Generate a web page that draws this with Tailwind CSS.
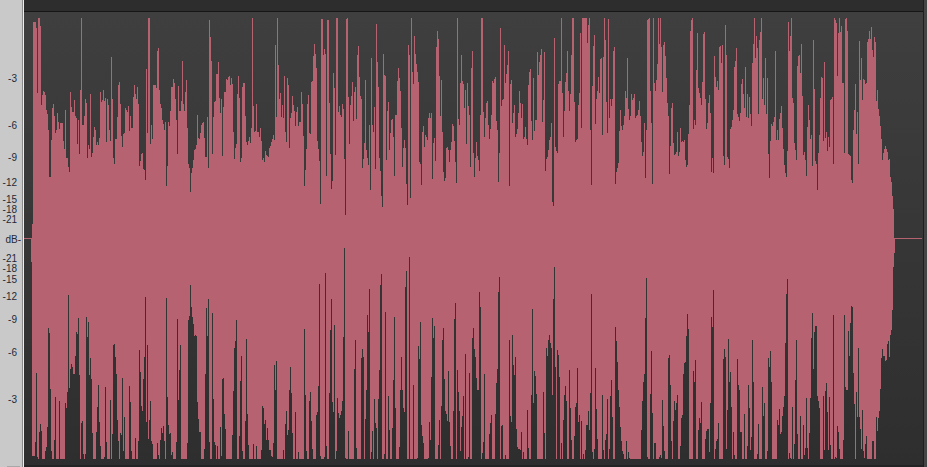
<!DOCTYPE html>
<html>
<head>
<meta charset="utf-8">
<script src="https://cdn.jsdelivr.net/npm/@tailwindcss/browser@4"></script>
<title>Waveform</title>
</head>
<body class="bg-[#3a3a3a]">
<div class="flex h-[467px] w-[927px] overflow-hidden">
  <div class="flex w-[22px] flex-col items-end bg-[#c9c9c9] pt-[73px] pr-[5px] font-['Liberation_Sans',sans-serif] text-[10px] leading-[12px] text-[#1f2a36]">
    <div class="h-[47px] shrink-0">-3</div>
    <div class="h-[32px] shrink-0">-6</div>
    <div class="h-[25px] shrink-0">-9</div>
    <div class="h-[17px] shrink-0">-12</div>
    <div class="h-[10px] shrink-0">-15</div>
    <div class="h-[10px] shrink-0">-18</div>
    <div class="h-[20px] shrink-0">-21</div>
    <div class="mr-[-4px] h-[19px] shrink-0">dB-</div>
    <div class="h-[10px] shrink-0">-21</div>
    <div class="h-[11px] shrink-0">-18</div>
    <div class="h-[17px] shrink-0">-15</div>
    <div class="h-[23px] shrink-0">-12</div>
    <div class="h-[33px] shrink-0">-9</div>
    <div class="h-[47px] shrink-0">-6</div>
    <div class="shrink-0">-3</div>
    <div class="mt-auto mr-[-3px] h-px w-[13px] shrink-0 bg-[#a8a8a8]"></div>
  </div>
  <div class="w-px bg-[#8a8a8a]"></div>
  <div class="w-px bg-[#ededed]"></div>
  <div class="flex w-[899px] flex-col">
    <div class="h-[11px] shrink-0 bg-[#2d2d2d]"></div>
    <div class="h-px shrink-0 bg-[#161616]"></div>
    <div class="h-[455px] shrink-0 bg-gradient-to-b from-[#3f3f3f] to-[#2e2e2e]">
      <svg class="block h-[455px] w-[899px]" viewBox="24 12 899 455" shape-rendering="crispEdges" xmlns="http://www.w3.org/2000/svg">
        <rect x="24" y="238" width="898" height="1" fill="#b76270"/>
        <rect x="24" y="465" width="899" height="2" fill="#232323"/>
        <path fill="#b76270" d="M32 239V224H33V22H36V28H37V93H38V18H40V26H41V105H42V95H43V91H44V92H45V95H46V110H47V114H48V130H49V177H51V140H52V108H53V104H54V116H55V133H56V130H57V113H58V122H59V129H60V123H63V141H64V149H65V110H66V158H68V167H69V172H70V92H71V107H72V112H74V100H75V116H76V118H77V144H78V120H79V154H80V90H81V18H82V125H84V116H85V99H86V103H87V158H88V145H89V149H90V94H91V157H92V153H93V137H94V127H95V130H96V145H97V142H98V145H99V138H100V92H101V102H102V100H103V90H104V101H105V98H106V142H107V99H108V105H109V130H110V141H111V57H112V99H113V158H114V164H115V139H117V117H118V85H119V82H120V104H121V136H122V147H123V134H124V133H125V108H126V110H127V112H128V106H129V131H130V116H131V128H133V97H134V85H135V94H136V99H137V87H138V104H139V166H140V161H141V154H142V153H143V169H144V170H145V180H146V69H147V133H148V18H150V144H151V125H152V139H153V85H155V85H156V88H157V51H158V48H159V90H160V104H161V108H162V120H163V124H164V130H165V122H166V186H167V166H168V122H169V126H170V111H171V87H173V79H174V83H175V99H176V120H177V154H178V86H179V111H181V101H182V61H183V104H184V111H185V92H186V80H187V128H188V164H189V168H190V192H191V173H192V168H193V160H194V150H195V149H196V145H197V115H198V138H199V139H200V133H201V125H202V123H203V122H204V138H205V157H207V117H208V168H209V20H210V37H211V61H212V154H213V117H214V102H215V101H216V74H218V62H219V98H220V113H221V99H222V156H223V107H224V92H226V79H227V80H228V77H229V76H230V85H231V78H232V84H233V132H234V159H235V148H236V144H237V94H238V76H239V98H240V162H241V158H242V87H243V83H245V116H246V142H247V145H248V141H249V137H250V143H251V128H252V18H253V106H254V132H255V131H256V104H257V132H258V132H259V137H260V128H261V141H262V160H263V158H264V162H265V151H266V155H267V156H268V157H269V148H270V146H271V142H272V139H273V135H274V140H275V45H276V117H277V18H278V65H279V99H280V93H281V117H282V105H283V118H284V76H285V132H286V142H287V78H288V85H289V148H290V118H291V113H292V96H293V105H294V111H295V126H296V112H297V107H298V126H299V122H301V92H302V104H303V136H304V186H305V170H306V149H307V104H308V95H309V133H310V134H311V82H312V81H313V56H314V44H315V54H316V68H317V141H318V149H319V161H320V204H321V19H323V55H324V49H325V54H326V176H327V20H329V103H330V154H331V189H332V181H333V73H334V88H335V155H336V18H338V112H339V106H340V115H341V117H342V104H343V109H344V159H345V215H346V19H347V18H348V97H349V144H350V105H351V96H352V82H353V121H354V92H355V87H356V119H357V55H358V46H359V77H360V96H361V99H362V168H363V159H364V143H365V80H366V150H367V158H368V165H369V125H370V190H371V58H372V125H373V132H374V107H375V169H376V24H377V62H378V87H379V158H380V171H381V196H382V207H383V54H384V75H385V76H386V160H387V111H388V102H389V150H390V133H391V120H392V119H393V137H394V176H395V115H397V81H398V68H399V78H400V91H401V128H402V167H403V148H404V140H405V148H406V184H407V205H408V45H409V55H410V198H411V18H412V72H413V84H414V36H415V54H416V64H417V72H418V82H419V162H420V164H421V185H422V132H423V126H424V147H425V135H426V137H427V140H428V118H429V113H430V118H431V113H432V179H433V143H434V138H435V161H436V47H437V31H438V39H439V76H440V116H441V80H442V132H443V172H444V181H445V178H446V148H447V147H448V150H449V162H450V150H451V142H452V124H453V126H454V141H455V162H456V183H457V18H458V119H459V125H460V83H461V55H462V81H463V84H464V108H465V90H466V144H467V83H468V106H469V115H470V167H471V68H472V51H473V153H474V177H475V158H476V142H477V156H478V160H479V171H480V115H481V18H483V112H484V137H485V118H486V103H487V101H488V125H489V139H490V129H491V115H492V81H493V83H494V79H495V77H496V121H497V130H498V182H499V153H500V28H501V106H502V100H503V99H504V45H505V83H506V74H507V65H508V51H509V186H510V84H511V80H512V123H513V113H514V105H515V137H516V134H517V129H518V113H519V91H520V103H521V118H522V104H523V139H524V137H525V127H526V139H527V145H528V85H529V72H530V69H531V121H532V140H533V78H534V131H535V120H537V52H538V75H539V62H540V55H541V49H542V122H543V100H544V52H545V171H546V159H547V157H548V150H549V140H550V137H551V123H552V202H553V206H554V38H555V147H556V151H557V153H558V84H559V81H561V18H562V93H563V137H564V111H565V82H566V73H567V51H568V91H569V111H570V94H571V55H572V18H574V102H575V142H576V140H577V139H578V105H579V93H580V33H581V128H582V18H587V43H588V25H589V18H590V130H591V185H592V86H593V46H594V35H595V124H596V99H597V91H598V77H599V93H600V59H601V58H602V135H603V57H604V18H605V40H606V102H607V133H608V19H609V118H610V99H611V106H612V99H613V51H614V47H615V184H616V172H617V168H618V163H619V131H620V110H621V126H622V130H623V125H624V116H625V91H626V98H627V58H628V109H629V120H630V116H631V94H632V100H633V98H634V94H635V118H636V116H637V115H638V110H639V101H640V116H641V142H642V156H643V152H644V123H645V178H646V130H647V20H648V19H649V18H650V91H651V123H652V184H653V18H654V83H655V91H656V80H657V64H658V18H659V44H660V18H661V47H662V92H663V45H664V42H665V56H666V78H667V103H668V116H669V174H670V146H671V108H672V103H673V143H674V155H675V154H676V152H677V132H678V156H679V152H680V128H681V142H682V141H683V142H684V140H685V160H686V167H687V165H688V134H689V105H690V31H691V20H692V18H693V129H694V120H695V125H696V70H697V33H698V88H699V93H700V98H701V105H702V82H703V34H704V32H705V99H706V129H707V123H708V103H709V95H710V113H711V172H712V158H713V173H714V56H715V77H716V87H717V81H718V90H719V47H720V46H721V63H722V45H723V156H724V165H725V25H726V55H727V157H728V159H729V168H730V129H731V127H732V120H733V110H734V67H735V61H736V48H737V114H738V117H739V121H740V113H741V84H742V79H743V94H744V108H745V67H746V117H747V94H748V118H749V97H750V114H751V126H752V63H753V44H754V18H755V58H756V36H757V48H758V114H759V40H760V32H761V18H762V99H763V78H764V105H765V58H766V114H767V78H768V154H769V178H770V141H771V124H772V126H773V122H774V117H775V51H776V140H777V130H778V140H779V119H780V113H781V106H782V128H783V149H784V165H785V173H786V177H787V151H788V22H789V51H790V36H791V18H792V98H793V103H794V143H795V150H796V160H797V66H798V56H799V55H800V73H801V44H802V96H803V155H804V152H805V160H806V176H807V127H808V105H809V120H810V139H811V135H812V166H813V40H814V89H815V161H816V164H817V190H818V153H819V135H820V98H821V77H822V78H823V141H824V62H825V138H826V132H827V151H828V137H829V147H830V100H831V99H832V97H833V164H834V18H835V20H836V23H837V76H838V33H839V18H840V32H841V26H842V83H844V153H845V19H846V18H847V31H848V154H849V155H850V156H851V180H852V183H853V130H854V110H855V84H856V134H857V112H858V164H859V41H860V80H861V58H862V100H863V79H864V80H865V84H866V83H867V42H868V39H869V31H870V39H871V27H872V50H873V57H874V37H875V42H876V101H877V90H878V109H879V116H880V126H881V139H882V160H883V153H884V149H885V146H886V149H887V152H888V160H889V159H890V177H891V182H892V196H893V209H894V239Z"/>
        <path fill="#b76270" d="M31 238V262H32V456H35V442H36V373H37V457H38V459H39V432H40V424H41V431H42V459H45V451H46V447H47V427H48V328H49V333H50V389H51V451H52V459H54V440H55V397H56V459H59V401H60V459H65V403H66V408H67V392H68V295H69V388H70V369H71V364H72V367H73V374H75V356H76V332H77V334H78V318H79V375H80V459H81V423H82V421H83V454H84V459H85V454H86V317H87V337H88V322H89V375H90V358H91V379H92V433H93V459H96V432H97V407H98V385H99V422H100V446H101V459H104V457H105V387H106V442H107V459H110V400H111V459H112V434H113V345H114V344H115V357H116V374H117V420H118V441H119V459H120V433H121V435H122V378H123V451H124V417H125V459H129V386H130V402H131V451H132V459H135V438H136V459H138V441H139V350H140V372H141V406H142V411H143V379H144V357H145V297H146V422H147V345H148V439H149V420H150V401H151V441H152V444H153V459H157V443H158V455H159V459H160V440H161V428H162V433H163V426H164V441H165V459H166V298H167V397H168V425H169V434H170V433H171V455H172V452H173V459H176V442H177V319H178V400H179V370H180V345H181V459H187V443H188V320H189V316H190V285H191V307H192V317H193V324H194V336H195V335H196V336H197V402H198V419H199V432H201V459H204V449H205V374H206V308H207V336H208V299H209V442H210V459H212V313H213V399H214V442H215V445H216V459H217V446H218V459H220V427H221V456H222V379H223V378H224V414H225V429H226V459H232V435H233V391H234V348H235V341H236V320H237V459H239V436H240V381H241V356H242V451H243V459H245V421H246V339H247V414H248V445H249V459H253V444H254V459H256V446H257V459H261V450H262V406H263V408H264V424H265V420H266V440H267V428H268V440H269V450H270V450H271V456H272V457H273V443H274V365H275V390H276V361H277V459H283V450H284V459H285V424H286V411H287V435H288V430H289V390H290V367H291V393H292V433H293V459H295V412H296V459H298V452H299V459H304V329H305V395H306V451H307V459H309V401H310V392H311V421H312V449H313V459H316V415H317V412H318V386H319V284H320V456H321V459H324V457H325V273H326V446H327V459H329V393H330V330H331V299H332V402H333V412H334V325H335V459H336V451H337V398H338V413H339V418H340V415H341V411H342V401H343V337H344V248H345V458H346V459H348V431H349V459H354V369H355V340H356V448H357V459H361V358H362V349H363V357H364V459H365V419H366V390H367V315H368V332H369V289H370V459H371V452H372V431H373V459H374V399H375V423H376V428H377V459H378V399H379V370H380V285H381V274H382V459H384V454H385V312H386V459H388V396H389V430H390V459H392V428H393V380H394V317H395V408H396V459H399V447H400V390H401V357H402V390H403V408H404V412H405V287H406V271H407V459H409V257H410V459H413V385H414V459H417V458H418V346H419V359H420V322H421V425H422V436H423V443H424V459H428V458H429V422H430V440H431V377H432V318H433V338H434V326H435V459H438V445H439V420H440V459H441V406H442V340H443V328H444V379H445V411H446V414H447V421H448V371H449V422H450V446H451V459H453V411H454V319H455V303H456V459H457V370H458V392H459V411H460V451H461V427H462V416H463V396H464V459H465V354H466V459H468V457H469V373H470V459H472V338H473V328H474V349H475V357H476V378H477V390H479V292H480V307H481V459H482V453H483V442H484V374H485V459H489V434H490V423H491V415H492V459H495V414H496V383H497V369H498V292H499V277H500V459H501V426H502V425H503V459H505V455H506V459H509V340H510V416H511V422H512V335H513V365H514V375H515V357H516V429H517V447H518V449H520V450H521V432H522V459H523V452H524V459H527V410H528V448H529V459H531V395H532V309H533V403H534V371H535V376H536V394H537V459H543V392H544V433H545V459H546V348H547V356H548V340H549V335H550V343H551V348H552V395H553V299H554V267H555V367H556V459H557V350H558V355H559V377H560V459H561V443H562V459H563V420H564V395H565V386H566V401H567V459H569V370H570V408H571V440H572V459H574V436H575V407H576V403H577V368H578V422H579V415H580V459H581V421H582V459H583V454H584V459H585V450H586V425H588V411H589V430H590V393H591V294H592V452H593V459H594V449H595V368H596V409H597V439H598V459H602V395H603V450H604V459H605V440H606V434H607V399H608V459H609V449H610V396H611V380H612V417H613V459H615V327H616V341H617V362H618V390H619V407H620V427H621V441H622V451H623V454H624V459H626V441H627V459H628V452H629V458H630V459H641V430H642V401H643V382H644V374H645V318H646V278H647V457H648V459H650V394H651V351H652V413H653V459H654V443H656V459H659V457H660V455H661V458H662V400H663V426H664V451H665V459H668V358H669V355H670V385H671V441H672V459H673V421H674V401H675V410H676V403H677V395H678V459H680V446H681V418H682V415H683V374H684V363H685V362H686V336H687V314H688V329H689V459H693V371H694V382H695V360H696V459H698V430H699V418H700V423H701V402H702V459H705V439H706V431H707V429H709V452H710V403H711V317H712V327H713V290H714V459H715V449H716V441H717V439H718V423H719V459H723V359H724V349H725V357H726V449H727V410H728V339H729V382H730V372H731V407H732V459H733V432H734V455H735V459H737V359H738V385H739V390H740V432H742V459H744V414H745V459H747V446H748V385H749V408H750V450H751V437H752V340H753V382H754V459H757V454H758V424H759V459H762V387H763V416H764V403H765V459H767V451H768V358H769V367H770V351H771V382H772V459H777V420H778V425H779V409H780V434H781V432H782V416H783V407H784V396H785V343H786V294H787V279H788V459H789V453H790V458H791V459H792V407H793V459H794V444H795V380H796V340H797V434H798V459H800V416H801V459H803V425H804V455H805V448H806V398H807V448H808V459H809V433H810V398H811V338H812V313H813V369H814V332H815V326H817V396H818V401H819V408H820V459H823V396H824V450H825V391H826V383H827V412H828V450H829V397H830V445H831V459H833V315H834V459H835V457H836V458H837V426H838V432H839V449H840V459H843V440H844V315H845V387H846V390H847V390H848V331H849V356H850V323H851V306H852V307H853V373H854V404H855V459H856V392H857V417H858V348H859V417H860V429H861V449H862V410H863V451H864V458H865V444H866V436H867V459H872V441H874V459H876V417H877V431H878V418H879V411H880V389H881V358H882V349H883V356H885V361H886V360H887V344H888V341H889V357H890V335H891V330H892V310H893V267H894V253H895V238Z"/>
      </svg>
    </div>
  </div>
  <div class="w-px bg-[#1f1f1f]"></div>
  <div class="w-[3px] bg-[#454545]"></div>
</div>
</body>
</html>
